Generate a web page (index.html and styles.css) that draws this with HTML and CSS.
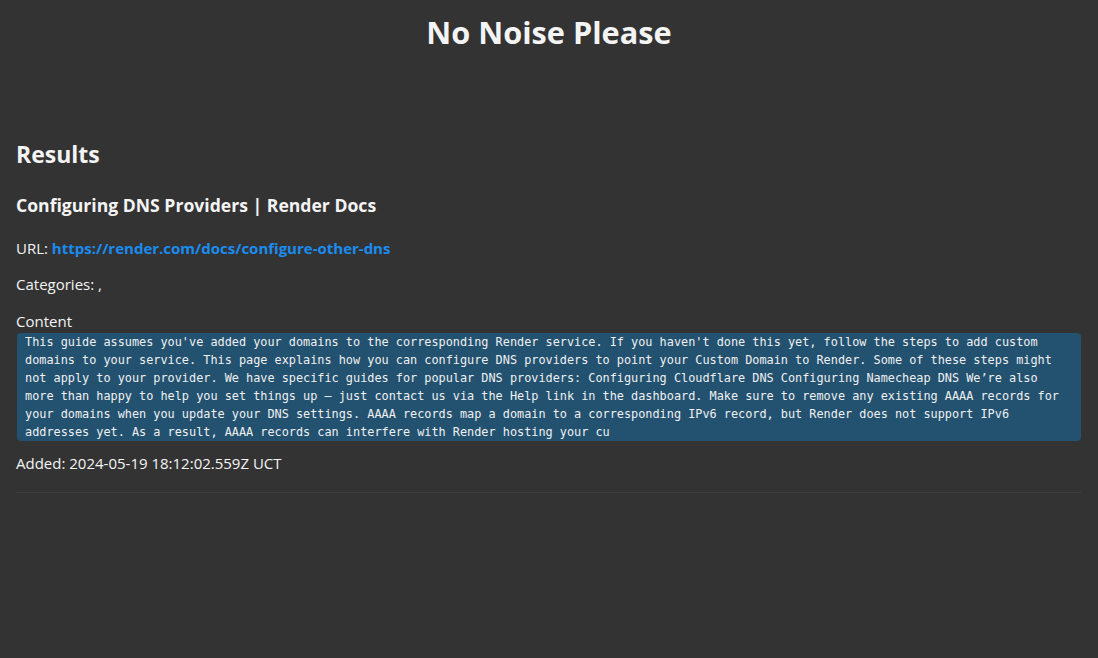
FILE: index.html
```html
<!DOCTYPE html>
<html lang="en">
<head>
<meta charset="utf-8">
<title>No Noise Please</title>
<link rel="stylesheet" href="styles.css">
</head>
<body>
<header class="site-header">
  <h1 class="site-title">No Noise Please</h1>
</header>
<main class="results">
  <h2 class="results-title">Results</h2>
  <article class="result">
    <h3 class="result-title">Configuring DNS Providers | Render Docs</h3>
    <p class="result-line result-url">URL: <a class="result-link" href="#">https://render.com/docs/configure-other-dns</a></p>
    <p class="result-line">Categories: ,</p>
    <p class="result-line result-label">Content</p>
    <pre class="result-content">This guide assumes you've added your domains to the corresponding Render service. If you haven't done this yet, follow the steps to add custom domains to your service. This page explains how you can configure DNS providers to point your Custom Domain to Render. Some of these steps might not apply to your provider. We have specific guides for popular DNS providers: Configuring Cloudflare DNS Configuring Namecheap DNS We’re also more than happy to help you set things up — just contact us via the Help link in the dashboard. Make sure to remove any existing AAAA records for your domains when you update your DNS settings. AAAA records map a domain to a corresponding IPv6 record, but Render does not support IPv6 addresses yet. As a result, AAAA records can interfere with Render hosting your cu</pre>
    <p class="result-line result-added">Added: 2024-05-19 18:12:02.559Z UCT</p>
  </article>
  <hr class="result-sep">
</main>
</body>
</html>
```
FILE: styles.css
```css
html, body {
  margin: 0;
  padding: 0;
  background: #333333;
  color: #f4f4f4;
  font-family: "Open Sans", "Noto Sans", sans-serif;
}

body {
  padding: 0 16px;
}

.site-header {
  display: flex;
  justify-content: center;
}

.site-title {
  margin: 12px 0 0;
  font-size: 30.7px;
  line-height: 40px;
  font-weight: 700;
}

.results {
  display: flex;
  flex-direction: column;
}

.results-title {
  margin: 87px 0 0;
  font-size: 23px;
  line-height: 30px;
  font-weight: 700;
}

.result {
  display: flex;
  flex-direction: column;
}

.result-title {
  margin: 24px 0 0;
  font-size: 17.6px;
  line-height: 24px;
  font-weight: 700;
}

.result-line {
  margin: 14px 0 0;
  font-size: 15px;
  line-height: 22px;
}

.result-url {
  margin-top: 20px;
}

.result-label {
  margin-top: 15px;
  margin-bottom: 1px;
}

.result-link {
  color: #1a8cf0;
  font-weight: 700;
  text-decoration: none;
}

.result-content {
  margin: 0 1px 0 1px;
  padding: 0 8px;
  background: #235270;
  border-radius: 4px;
  font-family: "DejaVu Sans Mono", monospace;
  font-size: 11.85px;
  line-height: 18px;
  white-space: pre-wrap;
  color: #f0f0f0;
}

.result-added {
  margin-top: 11px;
}

.result-sep {
  margin: 18px 1px 0 0;
  border: 0;
  height: 1px;
  background: #3f3f3f;
}
```
